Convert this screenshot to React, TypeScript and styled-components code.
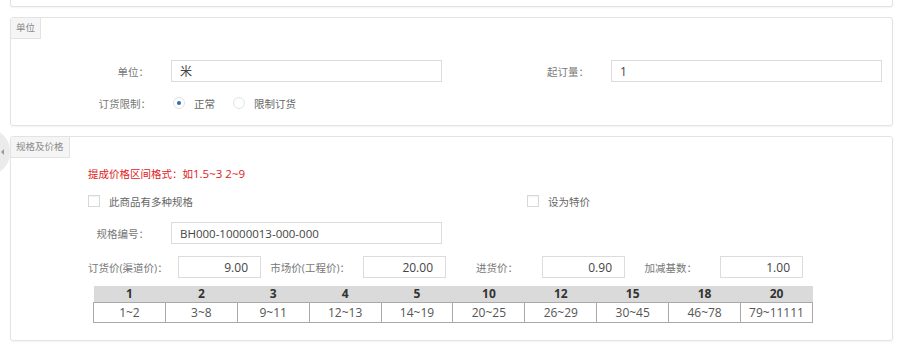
import React from "react";
import styled, { createGlobalStyle } from "styled-components";

const GlobalStyle = createGlobalStyle`
  body {
    margin: 0;
    background: #fff;
    font-family: "Open Sans", "Noto Sans CJK SC", sans-serif;
    font-size: 12px;
    color: #555;
  }
`;

const Page = styled.div`
  position: relative;
  width: 898px;
  height: 343px;
  padding: 0 5px 0 10px;
  box-sizing: border-box;
  overflow: hidden;
`;

const PrevPanel = styled.div`
  height: 6px;
  border: 1px solid #e3e3e3;
  border-top: none;
  border-radius: 0 0 3px 3px;
  box-shadow: 0 1px 2px rgba(0, 0, 0, 0.05);
`;

const Panel = styled.div<{ $h: number }>`
  margin-top: 10px;
  height: ${(p) => p.$h}px;
  box-sizing: border-box;
  border: 1px solid #e3e3e3;
  border-radius: 3px;
  box-shadow: 0 1px 2px rgba(0, 0, 0, 0.05);
`;

const Tab = styled.div`
  display: inline-block;
  height: 20px;
  line-height: 20px;
  padding: 0 5px;
  background: #f5f5f5;
  border-right: 1px solid #e3e3e3;
  border-bottom: 1px solid #e3e3e3;
  font-size: 9.5px;
  color: #8a8a8a;
  vertical-align: top;
`;

const Row = styled.div<{ $mt: number; $pl?: number }>`
  display: flex;
  align-items: center;
  height: 22px;
  margin-top: ${(p) => p.$mt}px;
  padding-left: ${(p) => p.$pl ?? 0}px;
`;

const Label = styled.div<{ $w: number; $pr: number }>`
  width: ${(p) => p.$w}px;
  padding-right: ${(p) => p.$pr}px;
  box-sizing: border-box;
  text-align: right;
  color: #777;
  font-size: 10.5px;
  white-space: nowrap;
  flex-shrink: 0;
`;

const Input = styled.div<{ $w: number; $right?: boolean; $fs?: number }>`
  width: ${(p) => p.$w}px;
  height: 22px;
  line-height: 22px;
  box-sizing: border-box;
  border: 1px solid #dcdcdc;
  padding: 0 ${(p) => (p.$right ? 12 : 8)}px 0 8px;
  color: #444;
  font-size: ${(p) => p.$fs ?? 12}px;
  text-align: ${(p) => (p.$right ? "right" : "left")};
  flex-shrink: 0;
`;

const Radio = styled.span<{ $on?: boolean }>`
  display: inline-flex;
  align-items: center;
  justify-content: center;
  width: 12px;
  height: 12px;
  border-radius: 50%;
  border: 1px solid #e2e2e2;
  box-sizing: border-box;
  margin: 0 9px 0 0;
  &::after {
    content: "";
    width: 4px;
    height: 4px;
    border-radius: 50%;
    background: ${(p) => (p.$on ? "#2d6fb6" : "transparent")};
  }
`;

const Option = styled.span`
  display: inline-flex;
  align-items: center;
  color: #666;
  font-size: 10.5px;
  margin-right: 18px;
`;

const RedNote = styled.div`
  margin: 8px 0 0 77px;
  height: 16px;
  line-height: 16px;
  color: #e0201a;
  font-size: 10.5px;
  span {
    font-size: 11.5px;
  }
`;

const Check = styled.span`
  display: inline-block;
  width: 12px;
  height: 12px;
  border: 1px solid #d8d8d8;
  box-shadow: inset 0 1px 1px rgba(0, 0, 0, 0.05);
  box-sizing: border-box;
  margin-right: 9px;
`;

const CheckItem = styled.span<{ $w?: number }>`
  display: inline-flex;
  align-items: center;
  width: ${(p) => (p.$w ? `${p.$w}px` : "auto")};
  color: #666;
  font-size: 10.5px;
`;

const Table = styled.table`
  margin: 8px 0 0 82px;
  border-collapse: collapse;
  width: 720px;
  table-layout: fixed;
  font-size: 12px;
  th {
    background: #dadada;
    color: #333;
    font-weight: bold;
    height: 16px;
    line-height: 16px;
    padding: 0;
  }
  td {
    border: 1px solid #a9a9a9;
    height: 19px;
    line-height: 19px;
    padding: 0;
    text-align: center;
    color: #555;
  }
`;

const SideHandle = styled.div`
  position: absolute;
  left: -12px;
  top: 129px;
  width: 22px;
  height: 46px;
  border-radius: 0 23px 23px 0;
  background: #ebebeb;
  display: flex;
  align-items: center;
  justify-content: flex-end;
  padding-right: 6px;
  box-sizing: border-box;
  &::after {
    content: "";
    border-top: 3px solid transparent;
    border-bottom: 3px solid transparent;
    border-right: 3px solid #999;
  }
`;

const heads = ["1", "2", "3", "4", "5", "10", "12", "15", "18", "20"];
const ranges = ["1~2", "3~8", "9~11", "12~13", "14~19", "20~25", "26~29", "30~45", "46~78", "79~11111"];

export default function App() {
  return (
    <Page>
      <GlobalStyle />
      <PrevPanel />
      <Panel $h={109}>
        <Tab>单位</Tab>
        <Row $mt={21}>
          <Label $w={160} $pr={22}>单位：</Label>
          <Input $w={271}>米</Input>
          <Label $w={169} $pr={22}>起订量：</Label>
          <Input $w={271}>1</Input>
        </Row>
        <Row $mt={10}>
          <Label $w={162} $pr={22}>订货限制：</Label>
          <Option><Radio $on />正常</Option>
          <Option><Radio />限制订货</Option>
        </Row>
      </Panel>
      <SideHandle />
      <Panel $h={205}>
        <Tab>规格及价格</Tab>
        <RedNote>提成价格区间格式：如<span>1.5~3 2~9</span></RedNote>
        <Row $mt={8} $pl={77}>
          <CheckItem $w={439}><Check />此商品有多种规格</CheckItem>
          <CheckItem><Check />设为特价</CheckItem>
        </Row>
        <Row $mt={10}>
          <Label $w={160} $pr={22}>规格编号：</Label>
          <Input $w={271} $fs={11.5}>BH000-10000013-000-000</Input>
        </Row>
        <Row $mt={12} $pl={77}>
          <Label $w={90} $pr={13}>订货价(渠道价)：</Label>
          <Input $w={83} $right>9.00</Input>
          <Label $w={102} $pr={13}>市场价(工程价)：</Label>
          <Input $w={83} $right>20.00</Input>
          <Label $w={96} $pr={24}>进货价：</Label>
          <Input $w={83} $right>0.90</Input>
          <Label $w={95} $pr={23}>加减基数：</Label>
          <Input $w={83} $right>1.00</Input>
        </Row>
        <Table>
          <thead>
            <tr>{heads.map((h) => <th key={h}>{h}</th>)}</tr>
          </thead>
          <tbody>
            <tr>{ranges.map((r) => <td key={r}>{r}</td>)}</tr>
          </tbody>
        </Table>
      </Panel>
    </Page>
  );
}
